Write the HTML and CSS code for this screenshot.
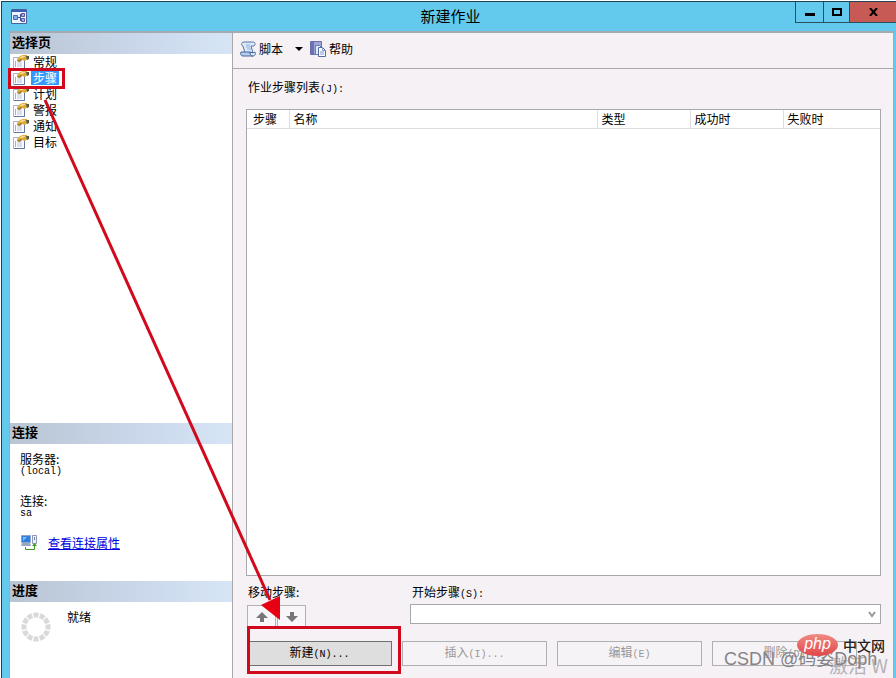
FILE: index.html
```html
<!DOCTYPE html>
<html lang="zh-CN">
<head>
    <meta charset="UTF-8">
    <meta name="viewport" content="width=device-width, initial-scale=1.0">
    <title>新建作业</title>
    <link rel="stylesheet" href="styles.css">
</head>
<body>
    <!-- Shared icons -->
    <svg class="defs" width="0" height="0" aria-hidden="true">
        <symbol id="icon-page" viewBox="0 0 16 14">
            <path d="M0.5 2.5h11v11h-11z" fill="#fbfcff" stroke="#a9b4d2"/>
            <path d="M11.5 6v7.500H1" fill="none" stroke="#66759f"/>
            <path d="M2 7h1M2 9h1M2 11h1" stroke="#4a64b0"/>
            <path d="M4 7h5M4 9h5M4 11h5" stroke="#b8c2de"/>
            <path d="M4 4l3-3 3-1h4l1 4-3 2-3-1-3 2-2-1z" fill="#dcab38"/>
            <path d="M6 3l3-2h4L9 3z" fill="#f8e08c"/>
            <path d="M13 1h3v3l-2 1z" fill="#4f5a50"/>
            <path d="M5 6l3-2 1 1-3 2z" fill="#8b6f2c"/>
        </symbol>
    </svg>

    <div class="window">
        <header class="titlebar">
            <svg class="app-icon" width="16" height="15" viewBox="0 0 16 15" aria-hidden="true">
                <path d="M0.5 0.5h15v14h-15z" fill="#eef3ff" stroke="#45659f"/>
                <path d="M1 1h14v2H1z" fill="#3b5fb5"/>
                <path d="M2.500 6.500h4v4h-4z" fill="#7fb0f0" stroke="#3f6cc0"/>
                <path d="M7 8.500h2M9.500 5v7M9 5.500h2M9 11.500h2" stroke="#3d5490" fill="none"/>
                <path d="M10.500 4.500h3v3h-3zM10.500 9.500h3v3h-3z" fill="#b6a9e4" stroke="#5b55a5"/>
            </svg>
            <h1>新建作业</h1>
            <div class="window-buttons">
                <button type="button" class="minimize" aria-label="最小化">
                    <svg width="10" height="10" viewBox="0 0 10 10"><path d="M0 6h10v3H0z"/></svg>
                </button>
                <button type="button" class="maximize" aria-label="最大化">
                    <svg width="10" height="8" viewBox="0 0 10 8"><path d="M1 1h8v6H1z" fill="none" stroke="#000" stroke-width="2"/></svg>
                </button>
                <button type="button" class="close" aria-label="关闭">
                    <svg width="9" height="8" viewBox="0 0 9 8"><path d="M1 0l7 8M8 0l-7 8" stroke="#000" stroke-width="2"/></svg>
                </button>
            </div>
        </header>

        <div class="content">
            <aside class="sidebar">
                <section class="pages">
                    <h2>选择页</h2>
                    <ul class="page-list">
                        <li><button type="button"><svg width="16" height="14"><use href="#icon-page"/></svg><span>常规</span></button></li>
                        <li><button type="button" class="selected"><svg width="16" height="14"><use href="#icon-page"/></svg><span>步骤</span></button></li>
                        <li><button type="button"><svg width="16" height="14"><use href="#icon-page"/></svg><span>计划</span></button></li>
                        <li><button type="button"><svg width="16" height="14"><use href="#icon-page"/></svg><span>警报</span></button></li>
                        <li><button type="button"><svg width="16" height="14"><use href="#icon-page"/></svg><span>通知</span></button></li>
                        <li><button type="button"><svg width="16" height="14"><use href="#icon-page"/></svg><span>目标</span></button></li>
                    </ul>
                </section>

                <section class="connection">
                    <h2>连接</h2>
                    <dl>
                        <dt>服务器:</dt>
                        <dd>(local)</dd>
                        <dt>连接:</dt>
                        <dd>sa</dd>
                    </dl>
                    <div class="connection-link">
                        <svg width="16" height="16" viewBox="0 0 16 16" aria-hidden="true">
                            <path d="M0.500 0.500h9v7h-9z" fill="#2f7fe0" stroke="#8fa6cc"/>
                            <path d="M2 2h4L2 6z" fill="#7cc0fa"/>
                            <path d="M1 8h8l1 3H0z" fill="#9ba6c0"/>
                            <path d="M11.500 0.500h4v8h-4z" fill="#eef2fa" stroke="#8a98b5"/>
                            <path d="M13 2h1v3h-1z" fill="#6d7f9f"/>
                            <path d="M4.500 12v2.500h9V10" fill="none" stroke="#3f9a20"/>
                            <path d="M11 11h5l-2.500-3z" fill="#3f9a20"/>
                        </svg>
                        <a href="#">查看连接属性</a>
                    </div>
                </section>

                <section class="progress">
                    <h2>进度</h2>
                    <div class="progress-state">
                        <svg width="30" height="30" viewBox="0 0 30 30" aria-hidden="true">
                            <circle cx="15" cy="15" r="12" fill="none" stroke="#d9d9d9" stroke-width="5" pathLength="120" stroke-dasharray="8 2" stroke-dashoffset="4"/>
                        </svg>
                        <span>就绪</span>
                    </div>
                </section>
            </aside>

            <main class="main">
                <div class="toolbar">
                    <button type="button">
                        <svg width="16" height="16" viewBox="0 0 16 16" aria-hidden="true">
                            <path d="M4 1h9c2 0 3 2 1 4h-3l2 7H5L3 5C1 5 1 1 4 1z" fill="#dceafb" stroke="#5474a8"/>
                            <path d="M1 11h9c0 2 1 4 3 4H3c-2 0-3-2-2-4z" fill="#b4cdec" stroke="#44639a"/>
                            <path d="M10 11c0 2 1 4 3 4 2 0 3-2 2-4l-2 1z" fill="#edf5ff" stroke="#44639a"/>
                            <path d="M6 4h4M6 6h4M7 8h4" stroke="#91afd8"/>
                        </svg>
                        脚本
                    </button>
                    <button type="button" class="dropdown" aria-label="脚本选项">
                        <svg width="8" height="4" viewBox="0 0 8 4"><path d="M0 0h8L4 4z"/></svg>
                    </button>
                    <button type="button">
                        <svg width="16" height="16" viewBox="0 0 16 16" aria-hidden="true">
                            <path d="M0.500 0.500h11v13h-11z" fill="#a3a5d8" stroke="#6a70ae"/>
                            <path d="M1 1h3v12H1z" fill="#6a71b5"/>
                            <path d="M5.500 4.500h4l2 2v7h-6z" fill="#e5eeff" stroke="#627db4"/>
                            <path d="M8.500 6.500h4l3 3v6h-7z" fill="#f9fbff" stroke="#526da4"/>
                            <path d="M12.500 6.500v3h3M10 11h4M10 13h4" fill="none" stroke="#7f9bd0"/>
                        </svg>
                        帮助
                    </button>
                </div>

                <div class="steps">
                    <p class="steps-label" id="steps-label">作业步骤列表<span class="key">(J):</span></p>
                    <div class="steps-list">
                        <table aria-labelledby="steps-label">
                            <thead>
                                <tr>
                                    <th class="col-step">步骤</th>
                                    <th>名称</th>
                                    <th class="col-type">类型</th>
                                    <th class="col-type">成功时</th>
                                    <th class="col-fail">失败时</th>
                                </tr>
                            </thead>
                        </table>
                    </div>

                    <div class="options">
                        <div class="move">
                            <p>移动步骤:</p>
                            <div class="move-buttons">
                                <button type="button" aria-label="上移">
                                    <svg width="12" height="10" viewBox="0 0 12 10"><path d="M6 0l6 6H8v4H4V6H0z" fill="#777"/></svg>
                                </button>
                                <button type="button" aria-label="下移">
                                    <svg width="12" height="10" viewBox="0 0 12 10"><path d="M6 10l6-6H8V0H4v4H0z" fill="#777"/></svg>
                                </button>
                            </div>
                        </div>
                        <div class="start">
                            <label for="start-step">开始步骤<span class="key">(S):</span></label>
                            <div class="select-box">
                                <select id="start-step" disabled></select>
                                <svg width="8" height="7" viewBox="0 0 8 7" aria-hidden="true"><path d="M1 1l3 4 3-4" fill="none" stroke="#999" stroke-width="2"/></svg>
                            </div>
                        </div>
                    </div>

                    <div class="actions">
                        <button type="button" class="new">新建<span class="key">(N)...</span></button>
                        <button type="button" disabled>插入<span class="key">(I)...</span></button>
                        <button type="button" disabled>编辑<span class="key">(E)</span></button>
                        <button type="button" disabled>删除<span class="key">(D)</span></button>
                    </div>
                </div>
            </main>
        </div>
    </div>

    <!-- Annotations drawn over the dialog -->
    <div class="mark mark-step"></div>
    <div class="mark mark-new"></div>
    <svg class="arrow" width="240" height="530" viewBox="0 0 240 530" aria-hidden="true">
        <path d="M5 5L230 505" stroke="#d0091c" stroke-width="3"/>
        <path d="M221 510L240 501V525z" fill="#e60012"/>
    </svg>

    <!-- Watermarks -->
    <div class="watermark activate">激活 W</div>
    <div class="watermark csdn">CSDN @码姿Doph</div>
    <div class="php-logo"><span class="php">php</span><span class="php-cn">中文网</span></div>
</body>
</html>
```
FILE: styles.css
```css
* {
    box-sizing: border-box;
}
body {
    position: relative;
    margin: 0;
    padding: 1px 0 0 1px;
    min-height: 100vh;
    display: flex;
    overflow: hidden;
    background: #fff;
    color: #000;
    font-family: "Noto Sans CJK SC", "Liberation Sans", sans-serif;
    font-size: 12px;
    line-height: 16px;
}
h1, h2, p, ul, dl, dd {
    margin: 0;
    padding: 0;
}
button, select {
    margin: 0;
    padding: 0;
    border: 0;
    background: none;
    color: inherit;
    font: inherit;
}
svg {
    display: block;
    flex: none;
}
.defs {
    position: absolute;
}
.key, dd {
    font-family: "Liberation Mono", monospace;
    font-size: 10px;
}

/* Window frame */
.window {
    flex: 1;
    display: flex;
    flex-direction: column;
    border-top: 1px solid #1f4250;
    border-left: 1px solid #1f4250;
    background: #63caed;
    padding: 0 2px 0 7px;
}
.titlebar {
    display: grid;
    grid-template-columns: 100px 1fr 104px;
    height: 29px;
    margin-right: -2px;
}
.app-icon {
    margin: 7px 0 0 2px;
}
.titlebar h1 {
    font-size: 15px;
    font-weight: normal;
    line-height: 28px;
    text-align: center;
}
.window-buttons {
    display: flex;
    justify-content: flex-end;
    height: 21px;
}
.window-buttons button {
    display: flex;
    align-items: center;
    justify-content: center;
    border: 1px solid #29505f;
    border-width: 0 0 1px 1px;
}
.minimize {
    width: 28px;
}
.maximize {
    width: 26px;
}
.window-buttons .close {
    width: 47px;
    background: #c75a55;
}
.content {
    flex: 1;
    display: grid;
    grid-template-columns: 223px 1fr;
    border: 1px solid #a3abb1;
    border-width: 2px 1px 0;
}

/* Left panel */
.sidebar {
    display: flex;
    flex-direction: column;
    background: #fff;
    border-right: 1px solid #a8a8ac;
}
.sidebar h2 {
    height: 21px;
    padding-left: 2px;
    background: linear-gradient(to right, #b9c5d3, #cbd8ec 60%, #d6e5f6);
    font-size: 13px;
    line-height: 18px;
}
.pages {
    flex: 1;
}
.page-list {
    list-style: none;
}
.page-list button {
    display: flex;
    align-items: center;
    gap: 2px;
    height: 16px;
    padding-left: 3px;
}
.page-list span {
    padding: 0 2px;
    line-height: 14px;
}
.selected span {
    background: #3399ff;
    color: #fff;
}
.connection {
    height: 158px;
}
.connection dl {
    padding: 7px 10px 0;
}
.connection dt {
    line-height: 15px;
}
.connection dd {
    height: 27px;
    line-height: 12px;
}
.connection-link {
    display: flex;
    align-items: center;
    gap: 11px;
    padding: 0 10px 0 11px;
}
.connection-link a {
    color: #0000e0;
}
.progress {
    height: 97px;
}
.progress-state {
    display: flex;
    gap: 16px;
    padding: 7px 11px;
}
.progress-state svg {
    margin-top: 3px;
}

/* Right panel */
.main {
    display: flex;
    flex-direction: column;
    background: #f6f1f5;
}
.toolbar {
    display: flex;
    align-items: center;
    height: 36px;
    padding: 0 7px 4px;
    border-bottom: 1px solid #a8a8ac;
}
.toolbar button {
    display: flex;
    align-items: center;
    gap: 3px;
}
.toolbar .dropdown {
    padding: 0 7px 0 12px;
}
.steps {
    flex: 1;
    display: flex;
    flex-direction: column;
    padding: 10px 12px 12px 13px;
}
.steps-label {
    height: 30px;
    padding-left: 2px;
}
.steps-list {
    flex: 1;
    border: 1px solid #a8a8ac;
    background: #fff;
}
.steps-list table {
    width: 100%;
    table-layout: fixed;
    border-collapse: collapse;
}
.steps-list th {
    height: 18px;
    padding: 0 0 0 4px;
    border-right: 1px solid #dedede;
    border-bottom: 1px solid #dedede;
    font-weight: normal;
    text-align: left;
}
.steps-list th:last-child {
    border-right: 0;
}
.steps-list .col-step {
    width: 42px;
    padding-left: 6px;
}
.col-type {
    width: 93px;
}
.col-fail {
    width: 97px;
}
.options {
    display: grid;
    grid-template-columns: 164px 1fr;
    margin-top: 8px;
}
.options p, .options label {
    display: block;
    height: 20px;
    padding-left: 2px;
}
.move-buttons {
    display: flex;
    gap: 1px;
    padding: 1px 0 0 1px;
}
.move-buttons button {
    display: flex;
    align-items: center;
    justify-content: center;
    width: 29px;
    height: 24px;
    border: 1px solid #b2b2b4;
    background: #f8f6f8;
}
.select-box {
    display: grid;
    align-items: center;
}
.select-box select, .select-box svg {
    grid-area: 1 / 1;
}
.select-box select {
    appearance: none;
    width: 100%;
    height: 20px;
    border: 1px solid #a8a8ac;
    background: #fff;
    opacity: 1;
}
.select-box svg {
    justify-self: end;
    margin-right: 5px;
}
.actions {
    display: flex;
    gap: 10px;
    margin: 12px 0 0 1px;
}
.actions button {
    width: 145px;
    height: 25px;
    border: 1px solid #b0b0b2;
    background: #f6f3f6;
    color: #989898;
}
.actions .new {
    border-color: #707070;
    background: #dedede;
    color: #000;
}

/* Annotations */
.mark {
    position: absolute;
    border: 3px solid #d0091c;
}
.mark-step {
    left: 8px;
    top: 68px;
    width: 57px;
    height: 21px;
}
.mark-new {
    left: 247px;
    top: 626px;
    width: 154px;
    height: 48px;
}
.arrow {
    position: absolute;
    left: 40px;
    top: 95px;
}

/* Watermarks */
.watermark, .php-logo {
    position: absolute;
    white-space: nowrap;
}
.activate {
    left: 829px;
    top: 653px;
    color: #b4b1b5;
    font-size: 19px;
    line-height: 24px;
}
.csdn {
    left: 724px;
    top: 647px;
    color: #858386;
    font-family: "Liberation Sans", "Noto Sans CJK SC", sans-serif;
    font-size: 18px;
    line-height: 24px;
}
.php-logo {
    left: 797px;
    top: 634px;
    display: flex;
    align-items: center;
    gap: 5px;
}
.php {
    width: 41px;
    height: 22px;
    border-radius: 50%;
    background: linear-gradient(#f08a84, #e0484a);
    color: #fff;
    font-family: "Liberation Sans", sans-serif;
    font-size: 16px;
    font-style: italic;
    line-height: 19px;
    text-align: center;
}
.php-cn {
    color: #222;
    font-size: 14px;
    font-weight: 500;
}
```
